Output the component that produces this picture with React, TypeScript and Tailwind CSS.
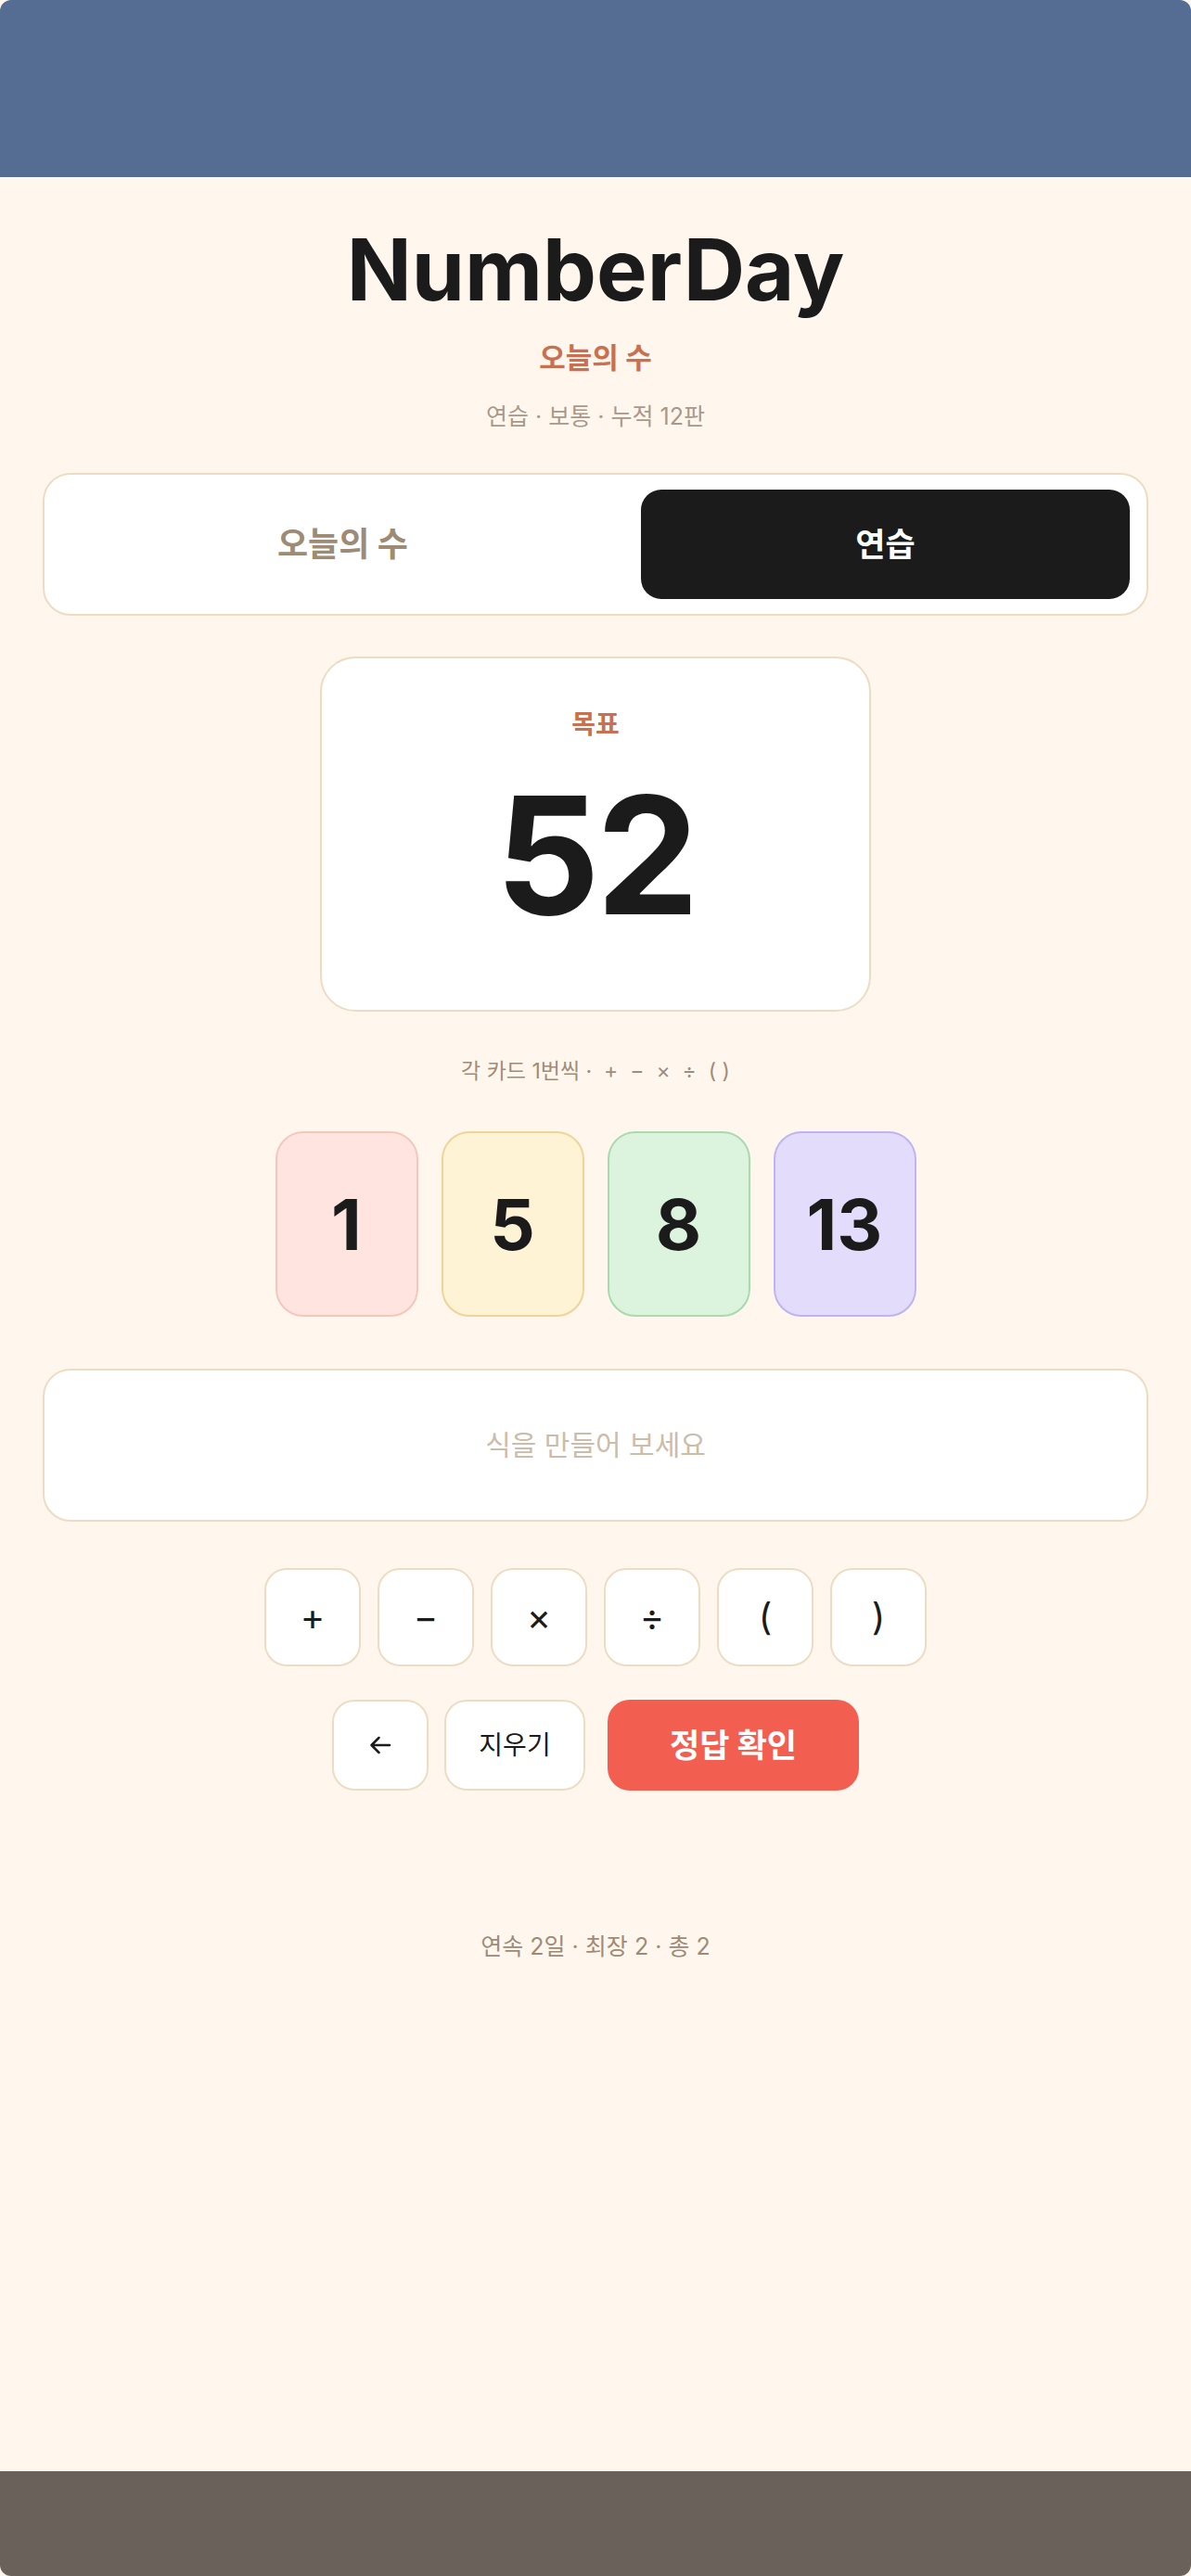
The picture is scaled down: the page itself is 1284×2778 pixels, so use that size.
import React from "react";

const FONT = { fontFamily: 'Inter, "Noto Sans CJK KR", "Noto Sans", sans-serif' };

const cards = [
  { n: "1", cls: "bg-[#ffe4df] border-[#f5c7bc]" },
  { n: "5", cls: "bg-[#fff3d6] border-[#eed496]" },
  { n: "8", cls: "bg-[#dcf4de] border-[#aad9af]" },
  { n: "13", cls: "bg-[#e3dcfb] border-[#c0b3f1]" },
];

const ops = ["+", "−", "×", "÷", "(", ")"];

export default function App() {
  return (
    <div style={FONT} className="w-[1284px] h-[2778px] flex flex-col bg-[#fff7ee] text-[#1b1b1b] overflow-hidden">
      <div className="h-[191px] shrink-0 bg-[#566d93] rounded-t-[12px]" />
      <main className="flex-1 flex flex-col items-stretch px-[46px]">
        <h1 className="mt-[54px] h-[92px] leading-[92px] text-center text-[92px] font-bold tracking-[0px] text-[#1b1b1b]">
          NumberDay
        </h1>
        <div className="mt-[29px] h-[40px] flex items-center justify-center text-[31px] font-bold text-[#c8704f]">
          오늘의 수
        </div>
        <div className="mt-[29px] h-[30px] flex items-center justify-center text-[25px] text-[#a8998a]">
          연습 · 보통 · 누적 12판
        </div>

        <div className="mt-[45px] h-[154px] bg-white border-2 border-[#eedcc2] rounded-[30px] py-[16px] px-[18px] flex gap-[18px]">
          <button className="flex-1 rounded-[22px] flex items-center justify-center text-[36px] font-bold text-[#9e8b76]">
            오늘의 수
          </button>
          <button className="w-[527px] rounded-[22px] bg-[#1b1b1b] flex items-center justify-center text-[35px] font-bold text-white">
            연습
          </button>
        </div>

        <div className="mt-[44px] self-center w-[594px] h-[383px] bg-white border-2 border-[#eedcc2] rounded-[38px] flex flex-col items-center">
          <div className="mt-[56px] h-[30px] flex items-center text-[28px] font-bold text-[#c8704f]">목표</div>
          <div className="mt-[38px] h-[176px] leading-[176px] text-[176px] font-bold tracking-[-4px] text-[#1b1b1b]">
            52
          </div>
        </div>

        <div className="mt-[49px] h-[30px] flex items-center justify-center text-[23px] text-[#a08c78] whitespace-pre">
          {"각 카드 1번씩 ·  +  −  ×  ÷  ( )"}
        </div>

        <div className="mt-[50px] flex justify-center gap-[25px]">
          {cards.map((c) => (
            <div
              key={c.n}
              className={`w-[154px] h-[200px] border-2 rounded-[30px] flex items-center justify-center text-[76px] font-bold ${c.cls}`}
            >
              {c.n}
            </div>
          ))}
        </div>

        <div className="mt-[56px] h-[165px] bg-white border-2 border-[#eedcc2] rounded-[30px] flex items-center justify-center text-[30px] text-[#cbbcab]">
          식을 만들어 보세요
        </div>

        <div className="mt-[50px] flex justify-center gap-[18px]">
          {ops.map((o) => (
            <button
              key={o}
              className="w-[104px] h-[106px] bg-white border-2 border-[#eedcc2] rounded-[24px] flex items-center justify-center text-[40px] font-normal text-[#1b1b1b]"
            >
              {o}
            </button>
          ))}
        </div>

        <div className="mt-[36px] flex justify-center">
          <button className="w-[104px] h-[98px] bg-white border-2 border-[#eedcc2] rounded-[24px] flex items-center justify-center text-[#1b1b1b]">
            <svg width="24" height="20" viewBox="0 0 24 20" fill="none" stroke="currentColor" strokeWidth="2.5" strokeLinecap="round" strokeLinejoin="round">
              <path d="M22 10H2.5M10.5 2L2.5 10L10.5 18" />
            </svg>
          </button>
          <button className="ml-[17px] w-[152px] h-[98px] bg-white border-2 border-[#eedcc2] rounded-[24px] flex items-center justify-center text-[28px] text-[#1b1b1b]">
            지우기
          </button>
          <button className="ml-[24px] w-[271px] h-[98px] bg-[#f25f50] rounded-[24px] flex items-center justify-center text-[35px] font-bold text-white">
            정답 확인
          </button>
        </div>

        <div className="mt-[154px] h-[30px] flex items-center justify-center text-[25px] text-[#9e8b76]">
          연속 2일 · 최장 2 · 총 2
        </div>
      </main>
      <div className="h-[113px] shrink-0 bg-[#6a615b] rounded-b-[12px]" />
    </div>
  );
}
